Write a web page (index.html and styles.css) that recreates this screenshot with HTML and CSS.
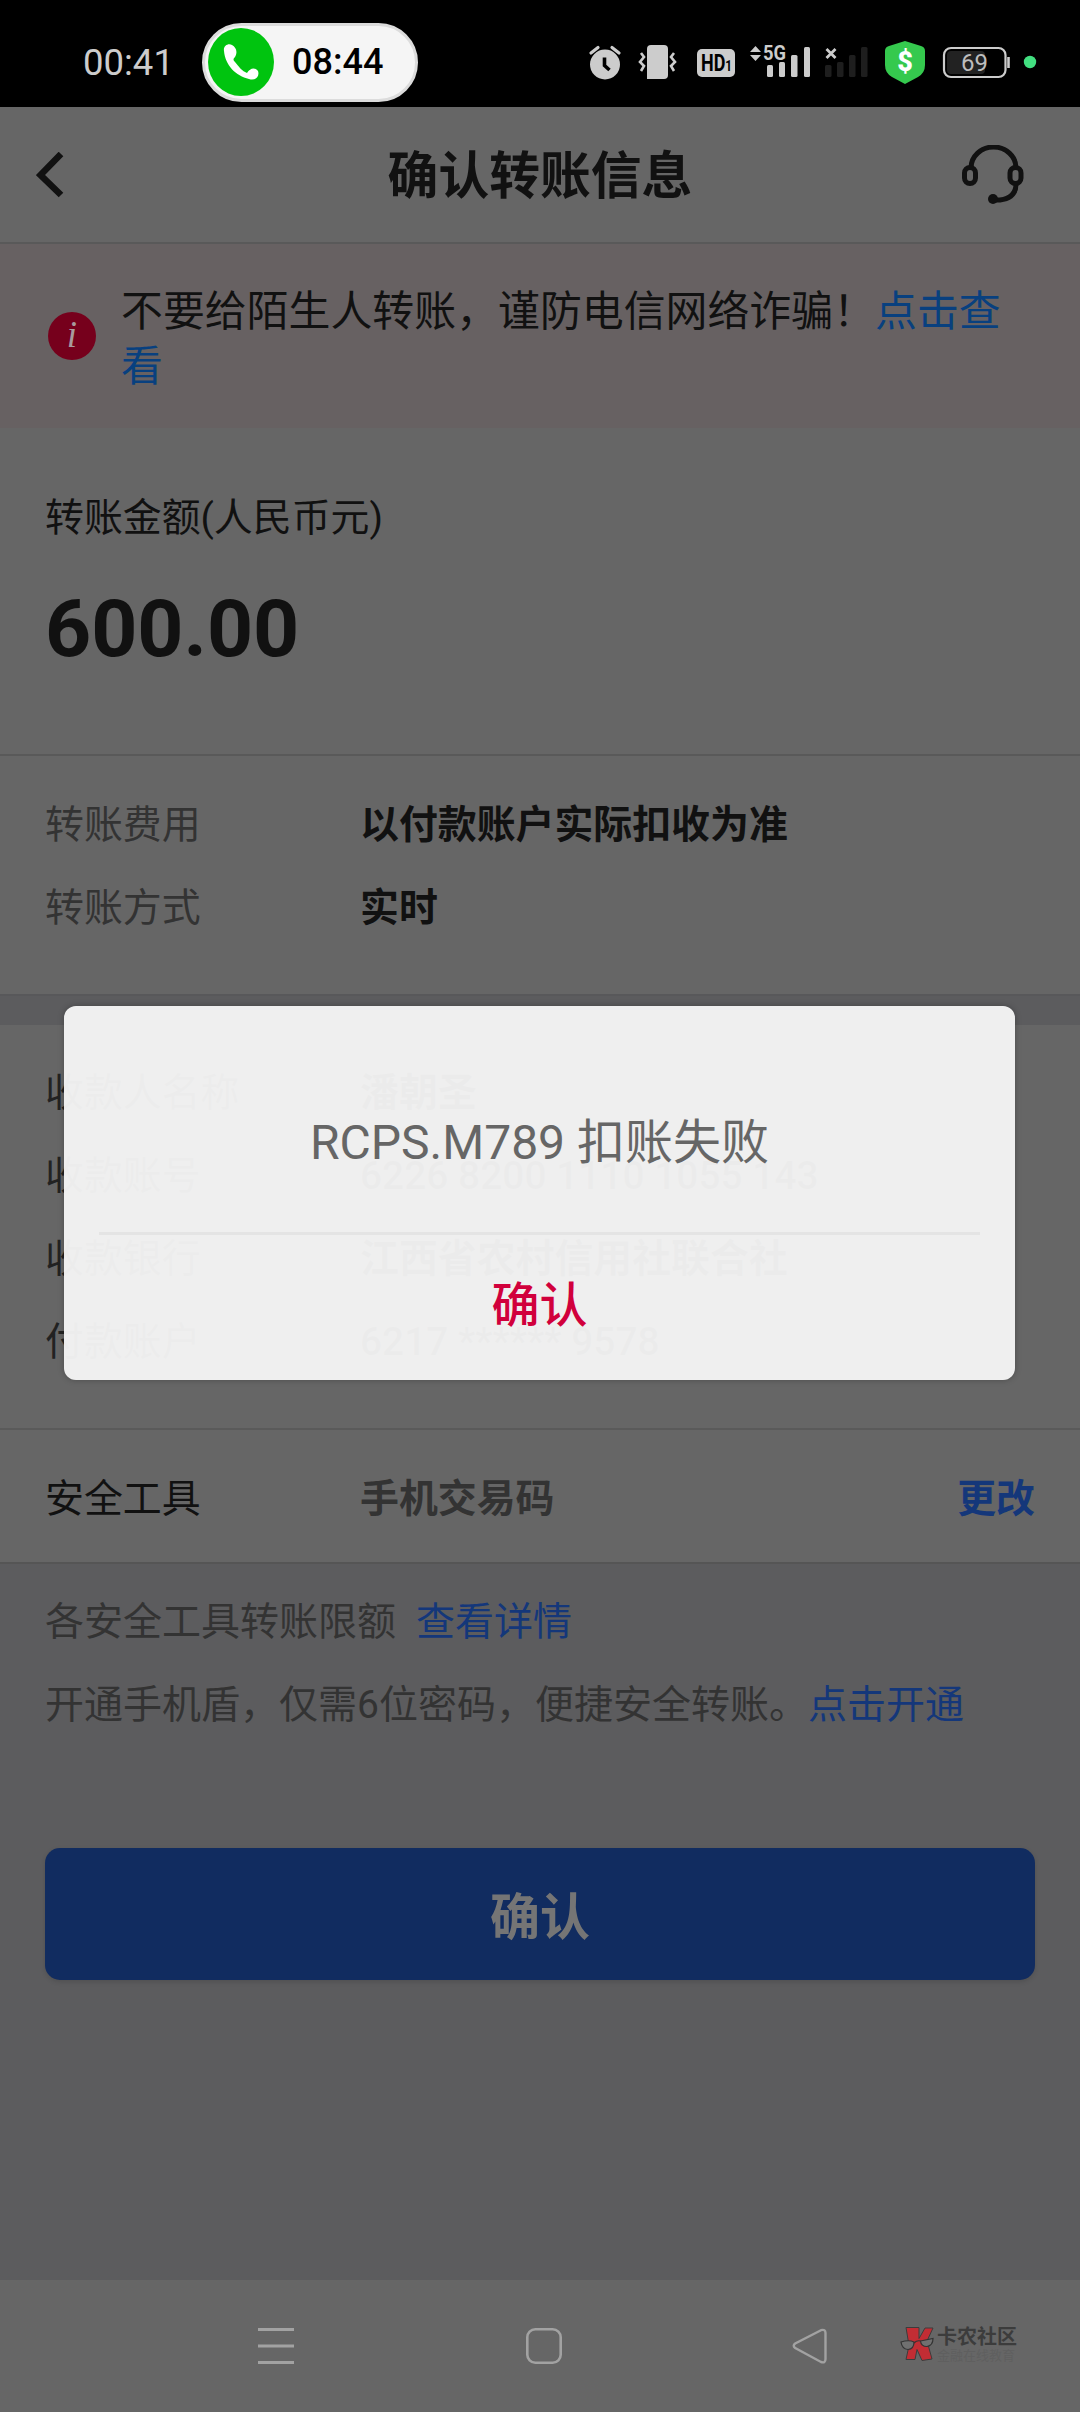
FILE: index.html
```html
<!DOCTYPE html>
<html lang="zh-CN">
<head>
<meta charset="utf-8">
<title>确认转账信息</title>
<link rel="stylesheet" href="styles.css">
</head>
<body>
<div class="screen">
  <div class="status">
    <span class="clock">00:41</span>
    <div class="call">
      <svg class="call-icon" width="66" height="68" viewBox="0 0 66 68"><ellipse cx="33" cy="34" rx="33" ry="34" fill="#00c40f"/><path d="M16 23C15 18 20 15 24 17C28 19 30 24 27 29C25 31 25 32 27 34C31 39 34 43 39 45C42 40 47 39 50 43C52 49 47 53 41 51C28 48 17 37 16 23Z" fill="#fff"/></svg>
      <span class="call-time">08:44</span>
    </div>
    <svg class="icons" width="460" height="50" viewBox="580 37 460 50">
      <g fill="#ccc">
        <circle cx="605" cy="64.500" r="15"/>
        <path d="M591 53l7-5.500M612 47.500l7 5.500" stroke="#ccc" stroke-width="3.2" stroke-linecap="round"/>
        <path d="M604.500 57.500v8l5 4.500" fill="none" stroke="#000" stroke-width="3.600"/>
        <path d="M651 45h13q4 0 4 4v26q0 4-4 4h-17v-30q0-4 4-4z"/>
        <path d="M641 53l3 4-4 5 4 4-3 5M674 53l-3 4 4 5-4 4 3 5" fill="none" stroke="#ccc" stroke-width="2.6"/>
        <rect x="697" y="49" width="38" height="28" rx="5"/>
        <path d="M750 52l5.5-6 5.500 6zM750 55l5.500 6 5.500-6z"/>
        <rect x="767" y="65" width="6" height="12" rx="1.500"/><rect x="779" y="62" width="6" height="15" rx="1.500"/><rect x="791" y="55" width="6.500" height="22" rx="1.500"/><rect x="804" y="47" width="6" height="30" rx="1.500"/>
      </g>
      <text x="701" y="71" class="hd" textLength="31" lengthAdjust="spacingAndGlyphs">HD<tspan class="hd-sub">1</tspan></text>
      <text x="763" y="60" class="net" textLength="23" lengthAdjust="spacingAndGlyphs">5G</text>
      <g fill="#1e1e1e"><rect x="825" y="65" width="6.500" height="12" rx="1.500"/><rect x="837" y="62" width="6.500" height="15" rx="1.500"/><rect x="849" y="55" width="6.500" height="22" rx="1.500"/><rect x="861" y="47" width="6.500" height="30" rx="1.500"/></g>
      <path d="M826.500 49l9 9M835.500 49l-9 9" stroke="#ccc" stroke-width="2.800"/>
      <path d="M905 41l16 5q4 1 4 5v14q0 8-7 12l-13 7-13-7q-7-4-7-12v-14q0-4 4-5z" fill="#35c94e"/>
      <text x="905" y="71" class="dollar">$</text>
      <rect x="947" y="51" width="38" height="23" rx="4" fill="#222"/>
      <rect x="944" y="48" width="61.500" height="29" rx="7" fill="none" stroke="#ccc" stroke-width="2.200"/>
      <path d="M1008.500 57v11" stroke="#ccc" stroke-width="2.600"/>
      <text x="974.500" y="71" class="battery">69</text>
      <circle cx="1030" cy="62" r="6.200" fill="#42df80"/>
    </svg>
  </div>

  <header class="header">
    <svg width="28" height="46" viewBox="0 0 28 46"><path d="M25 2L4.500 23l20.500 20" fill="none" stroke="#111" stroke-width="6.500"/></svg>
    <h1 class="title">确认转账信息</h1>
    <svg width="62" height="60" viewBox="0 0 62 60" fill="none" stroke="#111"><path d="M9 23a22.500 21 0 0 1 45 0M54 39q0 14-16 16h-7" stroke-width="5"/><rect x="2.500" y="22.500" width="11" height="16" rx="5.500" stroke-width="5"/><rect x="48" y="22.500" width="11" height="16" rx="5.500" stroke-width="5"/><circle cx="31" cy="54" r="5" fill="#111" stroke="none"/></svg>
  </header>

  <div class="notice">
    <span class="info">i</span>
    <p class="notice-text">不要给陌生人转账，谨防电信网络诈骗！<span class="link-bright">点击查看</span></p>
  </div>

  <section class="amount">
    <div class="amount-label">转账金额(人民币元)</div>
    <div class="amount-value">600.00</div>
  </section>

  <section class="fees">
    <div class="row"><span class="label">转账费用</span><span class="value">以付款账户实际扣收为准</span></div>
    <div class="row"><span class="label">转账方式</span><span class="value">实时</span></div>
  </section>

  <section class="payee">
    <div class="row"><span class="label">收款人名称</span><span class="value">潘朝圣</span></div>
    <div class="row"><span class="label">收款账号</span><span class="value number">6226 8200 1110 1055 143</span></div>
    <div class="row"><span class="label">收款银行</span><span class="value">江西省农村信用社联合社</span></div>
    <div class="row"><span class="label">付款账户</span><span class="value number">6217 ****** 9578</span></div>
  </section>

  <section class="security row">
    <span class="label">安全工具</span><span class="value">手机交易码</span><span class="change">更改</span>
  </section>

  <section class="tips">
    <p class="tip">各安全工具转账限额<span class="link detail">查看详情</span></p>
    <p class="tip">开通手机盾，仅需6位密码，便捷安全转账。<span class="link">点击开通</span></p>
  </section>
  <div class="submit">确认</div>

  <nav class="nav">
    <svg class="menu" width="36" height="36" viewBox="0 0 36 36"><path d="M0 1.500h36M0 18h36M0 34.500h36" stroke="#a2a2a2" stroke-width="3"/></svg>
    <svg class="home" width="36" height="36" viewBox="0 0 36 36"><rect x="1.300" y="1.300" width="33.400" height="33.400" rx="8" fill="none" stroke="#a2a2a2" stroke-width="2.600"/></svg>
    <svg class="back" width="36" height="36" viewBox="0 0 36 36"><path d="M29 2.200L3.200 15.500q-3 2.300 0 4.600L29 34q4.500 1.500 4.500-3V5q0-4-4.500-2.800z" fill="none" stroke="#a2a2a2" stroke-width="2.400"/></svg>
    <div class="brand">
      <svg width="35" height="36" viewBox="0 0 35 36"><path d="M6 1.500h13v11l6-10.500h8l-6 13 5 18-10 1.500-5-11-2 10H6l3-14z" fill="#c22d34" stroke="#3c3c3c"/><path d="M1 16q8-2.500 13 0 0 7-6 7.500-6-.5-7-7.500zM20.500 15l12.500-2.500q0 7-6 8-6 0-6.500-5.500z" fill="#707070" stroke="#333" stroke-width="1.200"/><path d="M14 17q3-3 6.500-2" fill="none" stroke="#333" stroke-width="1.200"/></svg>
      <div class="brand-text"><b class="brand-name">卡农社区</b><span class="brand-sub">金融在线教育</span></div>
    </div>
  </nav>

  <div class="dialog">
    <div class="dialog-message">RCPS.M789 扣账失败</div>
    <div class="dialog-action">确认</div>
  </div>
</div>
</body>
</html>
```
FILE: styles.css
```css
* { box-sizing: border-box; }
body { margin: 0; }
h1, p { margin: 0; font-weight: inherit; }
svg { display: block; flex: none; }

.screen {
  position: relative;
  display: flex;
  flex-direction: column;
  width: 1080px;
  height: 2412px;
  overflow: hidden;
  background: #5c5c5e;
  color: #111;
  font: 38.900px/83px Roboto, "Noto Sans CJK SC", sans-serif;
  white-space: nowrap;
}

.status {
  flex: none;
  display: flex;
  align-items: center;
  height: 107px;
  padding: 17px 40px 0 83px;
  background: #000;
}
.clock { width: 119px; padding-top: 1px; color: #ccc; font-size: 36.500px; line-height: 40px; }
.call {
  display: flex;
  align-items: center;
  gap: 18px;
  width: 216px;
  height: 79px;
  padding-left: 3px;
  border: 3px solid #dcdcdc;
  border-radius: 40px;
  background: #f5f5f5;
}
.call-time { color: #000; font-size: 36px; font-weight: 500; line-height: 40px; }
.icons { margin-left: auto; }
.hd { fill: #000; font: 700 23px Roboto, sans-serif; }
.hd-sub { font-size: 15px; }
.net { fill: #ccc; font: 700 21px Roboto, sans-serif; }
.dollar { fill: #fff; font: 900 27px Roboto, sans-serif; text-anchor: middle; }
.battery { fill: #bdbdbd; font: 400 24px Roboto, sans-serif; text-anchor: middle; }

.header {
  flex: none;
  display: flex;
  align-items: center;
  justify-content: space-between;
  height: 137px;
  padding: 0 56px 0 36px;
  border-bottom: 2px solid #595959;
  background: #666;
}
.title { margin-left: 54px; padding-top: 5px; font-size: 50.800px; font-weight: 700; line-height: 70px; }

.notice {
  flex: none;
  display: flex;
  align-items: center;
  gap: 25px;
  height: 184px;
  padding: 0 60px 0 48px;
  background: #676162;
}
.info {
  width: 48px;
  height: 48px;
  border-radius: 50%;
  background: #76001c;
  color: #a89a9d;
  font: italic 37px/46px "Liberation Serif", serif;
  text-align: center;
}
.notice-text { flex: 1; padding-top: 6px; font-size: 41.900px; line-height: 55px; white-space: normal; }
.link-bright { color: #08407f; }

.amount { flex: none; height: 328px; padding: 50px 45px 0; background: #666; border-bottom: 2px solid #595959; }
.amount-label { line-height: 80px; }
.amount-value { margin-top: 23px; font-size: 80.500px; font-weight: 700; line-height: 96px; }

.row { display: flex; }
.label { width: 315px; color: #333; }
.value { font-weight: 700; }
.number { font-weight: 500; }
.fees { flex: none; height: 240px; padding: 27px 45px 0; background: #666; border-bottom: 2px solid #58585a; }
.payee { flex: none; height: 405px; margin-top: 29px; padding: 26px 45px 0; background: #666; border-bottom: 2px solid #5a5a5a; }
.payee .label { color: #222; }
.security { flex: none; align-items: center; height: 134px; padding: 4px 45px 0; background: #666; border-bottom: 2px solid #555; }
.security .label { color: #111; }
.security .value { color: #333; }
.change { margin-left: auto; color: #14377a; font-weight: 700; }

.tips { flex: none; height: 284px; padding: 17px 45px; color: #333; font-size: 39px; }
.link { color: #14377a; }
.detail { margin-left: 20px; }
.submit {
  flex: none;
  height: 132px;
  margin: 0 45px;
  padding-top: 4px;
  border-radius: 15px;
  background: #112c60;
  box-shadow: 0 2px 5px #0002;
  color: #757575;
  font-size: 50px;
  font-weight: 700;
  line-height: 132px;
  text-align: center;
}

.nav { flex: none; display: flex; align-items: flex-start; height: 132px; margin-top: auto; padding: 48px 0 0 258px; background: #666; }
.home { margin-left: 232px; }
.back { margin-left: 230px; }
.brand { display: flex; align-items: center; gap: 2px; margin: -4px 0 0 72px; }
.brand-text { display: flex; flex-direction: column; padding-top: 2px; }
.brand-name { color: #3c3c3c; font-size: 20px; line-height: 22px; }
.brand-sub { color: #5f5f5f; font-size: 13px; line-height: 16px; }

.dialog {
  position: absolute;
  left: 64px;
  top: 1006px;
  width: 951px;
  height: 374px;
  padding: 0 35px;
  border-radius: 12px;
  background: rgba(246, 246, 246, .955);
  box-shadow: 0 0 6px #0004;
  text-align: center;
}
.dialog-message { height: 229px; padding-top: 97px; border-bottom: 3px solid #e4e4e4; color: #666; font-size: 48px; line-height: 80px; }
.dialog-action { padding-top: 31px; color: #d1003c; font-size: 48px; font-weight: 500; line-height: 80px; }
```
